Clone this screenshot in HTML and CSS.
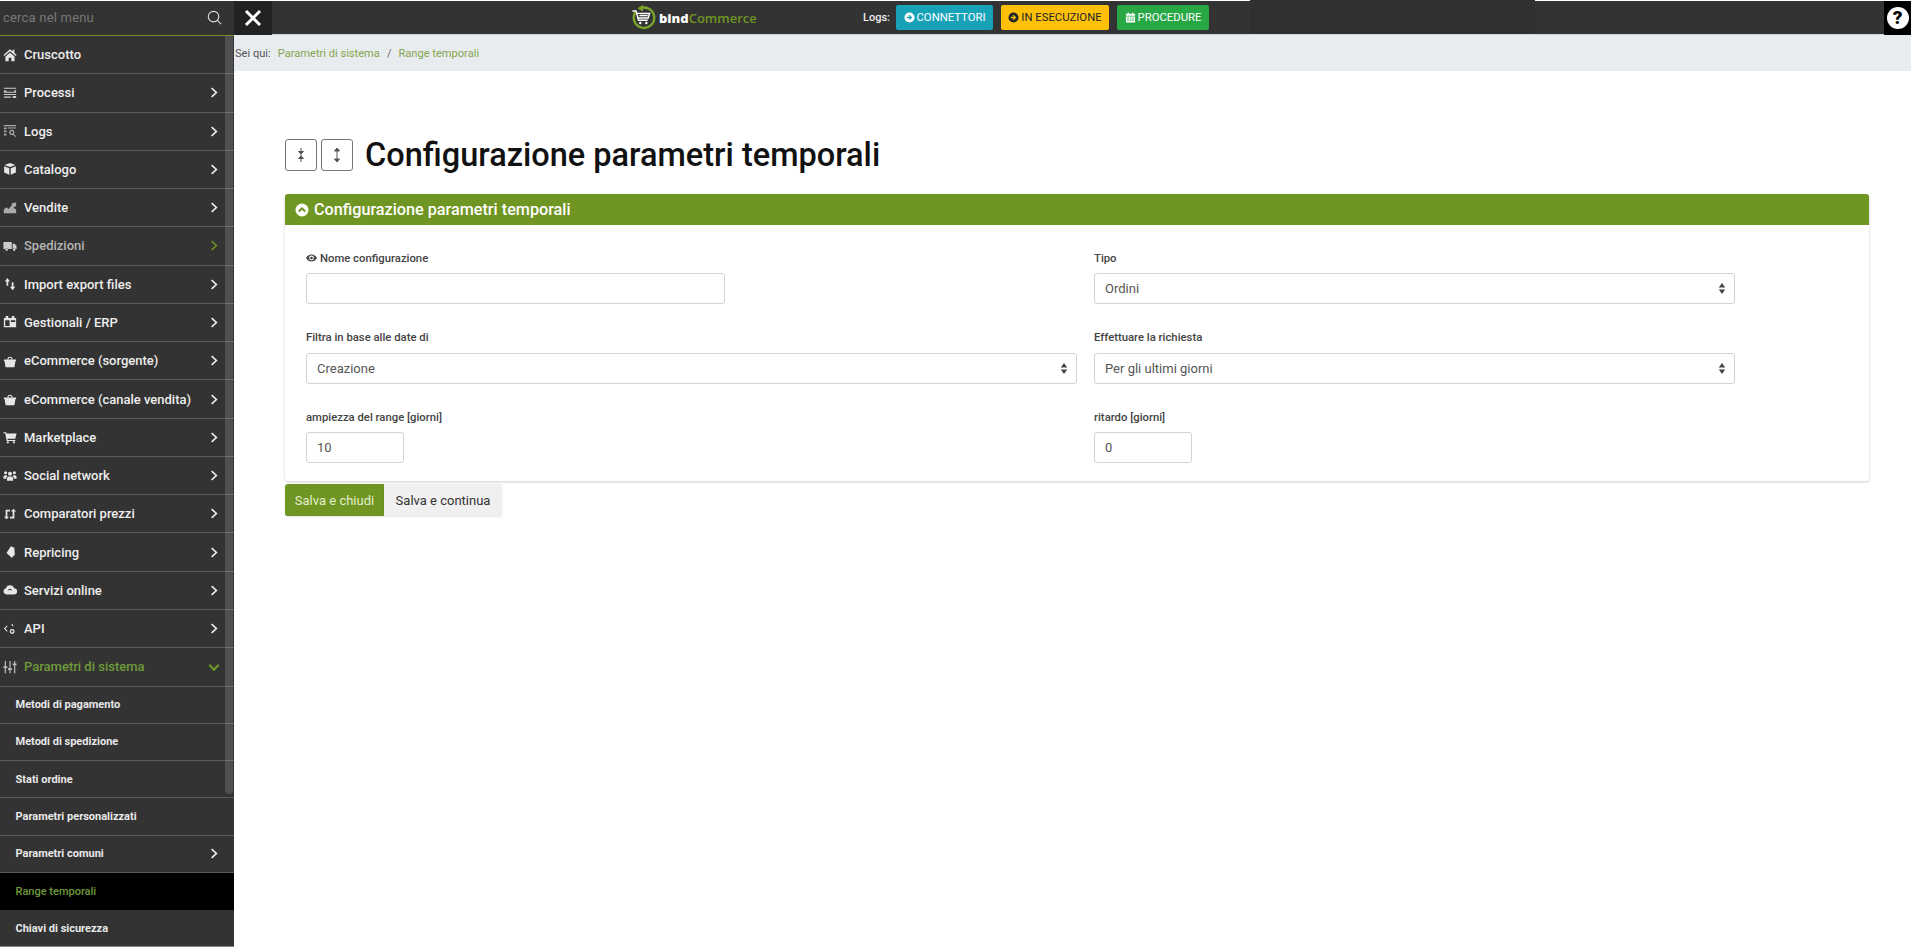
FILE: index.html
```html
<!DOCTYPE html>
<html lang="it">
<head>
<meta charset="utf-8">
<title>Configurazione parametri temporali</title>
<link rel="stylesheet" href="styles.css">
</head>
<body>
<div class="app">
  <aside class="sidebar">
    <div class="search">
      <span class="search-text">cerca nel menu</span>
      <svg class="search-icon" viewBox="0 0 16 16"><circle cx="7" cy="7" r="5.6"/><path d="M11 11l4 4"/></svg>
    </div>
    <div class="menu-wrap">
      <ul class="menu">
        <li class="item"><svg class="ico" viewBox="0 0 16 16"><path d="M8 1.5L0.5 8l1 1.2L8 3.800l6.500 5.400 1-1.200-2.500-2.200V2h-2v2zM2.800 9.600V15h3.700v-4h3v4h3.700V9.600L8 5.300z"/></svg><span class="label">Cruscotto</span></li>
        <li class="item has"><svg class="ico" viewBox="0 0 16 16"><path d="M1 2h14v1.200H1zM1 5h3v1.500h9V4.800h2v3H1zM1 9h14v1.200H1zM1 12h8v1.300H1zM11 11.500h4v2.300h-4z" opacity=".85"/></svg><span class="label">Processi</span><svg class="chev" viewBox="0 0 10 14"><path d="M2 1.500L8 7l-6 5.500"/></svg></li>
        <li class="item has"><svg class="ico dim" viewBox="0 0 16 16"><path d="M1 1h14v1.500H1zM1 4h3v2H1zM1 7.500h3v2H1zM1 11h3v2H1zM5.500 4H15v1.200H5.500zM10 6.500a3 3 0 1 1-.01 0zm0 1.400a1.600 1.600 0 1 0 .01 0zM12 11l3 3-.9.9-3-3z"/></svg><span class="label">Logs</span><svg class="chev" viewBox="0 0 10 14"><path d="M2 1.500L8 7l-6 5.500"/></svg></li>
        <li class="item has"><svg class="ico" viewBox="0 0 16 16"><path d="M8 1l6.200 2.400L8 5.800 1.800 3.400zM1.300 4.800l5.900 2.300v7.600l-5.900-2.600zM14.700 4.800v7.300l-5.900 2.600V7.100z"/></svg><span class="label">Catalogo</span><svg class="chev" viewBox="0 0 10 14"><path d="M2 1.500L8 7l-6 5.500"/></svg></li>
        <li class="item has"><svg class="ico dim" viewBox="0 0 16 16"><path d="M1 14V9.500L4 7l2.500 2L10.500 4 9.500 2.800 15 1.500v5.500l-1.200-1.200L12 8l3 1.500V14z"/></svg><span class="label">Vendite</span><svg class="chev" viewBox="0 0 10 14"><path d="M2 1.500L8 7l-6 5.500"/></svg></li>
        <li class="item has muted"><svg class="ico" viewBox="0 0 16 16"><path d="M0.500 3.500h9.500v8H6a2 2 0 0 0-3.600 0H0.500zM11 5.500h2.400l2.100 2.600v3.400h-.9a2 2 0 0 0-3.600 0zM4.200 10.600a1.500 1.500 0 1 1 0 3 1.500 1.500 0 0 1 0-3zM12.800 10.600a1.500 1.500 0 1 1 0 3 1.500 1.500 0 0 1 0-3z"/></svg><span class="label">Spedizioni</span><svg class="chev green" viewBox="0 0 10 14"><path d="M2 1.500L8 7l-6 5.500"/></svg></li>
        <li class="item has"><svg class="ico" viewBox="0 0 16 16"><path d="M5 1L8 5H6v5H4V5H2zM11 15l-3-4h2V6h2v5h2z"/></svg><span class="label">Import export files</span><svg class="chev" viewBox="0 0 10 14"><path d="M2 1.500L8 7l-6 5.500"/></svg></li>
        <li class="item has"><svg class="ico" viewBox="0 0 16 16"><path d="M3 1h3v2.500h4V1h3v2.500h2V14H1V3.500h2zM2.500 6v6.500h5V6zM9 6v2h5V6z"/></svg><span class="label">Gestionali / ERP</span><svg class="chev" viewBox="0 0 10 14"><path d="M2 1.500L8 7l-6 5.500"/></svg></li>
        <li class="item has"><svg class="ico" viewBox="0 0 16 16"><path d="M5 6a3 3 0 0 1 6 0h-1.400a1.600 1.600 0 0 0-3.200 0zM1 6.300h14v1.600h-.7L13 15H3L1.700 7.900H1z"/></svg><span class="label">eCommerce (sorgente)</span><svg class="chev" viewBox="0 0 10 14"><path d="M2 1.500L8 7l-6 5.500"/></svg></li>
        <li class="item has"><svg class="ico" viewBox="0 0 16 16"><path d="M5 6a3 3 0 0 1 6 0h-1.400a1.600 1.600 0 0 0-3.200 0zM1 6.300h14v1.600h-.7L13 15H3L1.700 7.900H1z"/></svg><span class="label">eCommerce (canale vendita)</span><svg class="chev" viewBox="0 0 10 14"><path d="M2 1.500L8 7l-6 5.500"/></svg></li>
        <li class="item has"><svg class="ico" viewBox="0 0 16 16"><path d="M0.500 2.500h3l.6 1.500H15.500l-1.500 6H5.200l.3 1.300H14V12.500H4.200L2.500 3.800h-2zM5.500 12.800a1.300 1.300 0 1 1 0 2.600 1.300 1.300 0 0 1 0-2.600zM12.500 12.800a1.300 1.300 0 1 1 0 2.600 1.300 1.300 0 0 1 0-2.600z"/></svg><span class="label">Marketplace</span><svg class="chev" viewBox="0 0 10 14"><path d="M2 1.500L8 7l-6 5.500"/></svg></li>
        <li class="item has"><svg class="ico" viewBox="0 0 16 16"><path d="M8 3a2.300 2.300 0 1 1 0 4.600A2.300 2.300 0 0 1 8 3zM3 2.500a1.800 1.800 0 1 1 0 3.600 1.800 1.800 0 0 1 0-3.600zM13 2.500a1.800 1.800 0 1 1 0 3.600 1.800 1.800 0 0 1 0-3.600zM0.500 11V8.500Q1 7 3 7h1.300Q4.500 8 5 8.500 3.500 9.200 3.500 11zM15.500 11V8.500Q15 7 13 7h-1.300q-.2 1-.7 1.500 1.500.7 1.500 2.500zM4.500 13.500V10.500Q5 8.500 6.500 8.500h3Q11 8.500 11.500 10.500v3z"/></svg><span class="label">Social network</span><svg class="chev" viewBox="0 0 10 14"><path d="M2 1.500L8 7l-6 5.500"/></svg></li>
        <li class="item has"><svg class="ico" viewBox="0 0 16 16"><path d="M3 3h5v2H5v6h2l-3 3-3-3h2zM13 13H8v-2h3V5H9l3-3 3 3h-2z"/></svg><span class="label">Comparatori prezzi</span><svg class="chev" viewBox="0 0 10 14"><path d="M2 1.500L8 7l-6 5.500"/></svg></li>
        <li class="item has"><svg class="ico" viewBox="0 0 16 16"><path d="M9 1.500l4 1.500 .5 8-3.500 3.500-6-5.500z"/></svg><span class="label">Repricing</span><svg class="chev" viewBox="0 0 10 14"><path d="M2 1.500L8 7l-6 5.500"/></svg></li>
        <li class="item has"><svg class="ico" viewBox="0 0 16 16"><path d="M4 13a3.500 3.500 0 0 1-.7-6.900A5 5 0 0 1 12.800 6 3.500 3.500 0 0 1 12.500 13zM8 6.500a2.500 2.500 0 0 0-2.400 1.800h1.500a1 1 0 0 1 1.800 0h1.500A2.500 2.500 0 0 0 8 6.500z"/></svg><span class="label">Servizi online</span><svg class="chev" viewBox="0 0 10 14"><path d="M2 1.500L8 7l-6 5.500"/></svg></li>
        <li class="item has"><svg class="ico" viewBox="0 0 16 16"><path d="M4.500 4L1 7.500l3.500 3.500.8-.8L2.600 7.500l2.700-2.700zM9.500 2.500l1.100-.6L12 4.500l-1 .6zM10.500 8a2.800 2.800 0 1 1 0 5.600 2.800 2.800 0 0 1 0-5.600zm0 1.500a1.300 1.300 0 1 0 0 2.600 1.300 1.300 0 0 0 0-2.600z"/></svg><span class="label">API</span><svg class="chev" viewBox="0 0 10 14"><path d="M2 1.500L8 7l-6 5.500"/></svg></li>
        <li class="item open"><svg class="ico" viewBox="0 0 16 16"><path d="M2 1h1.400v6H5v2H3.400v6H2V9H.5V7H2zM7.300 1h1.400v8.500h1.600v2H8.700V15H7.300v-3.500H5.700v-2h1.600zM12.600 1H14v3h1.500v2H14v9h-1.400V6H11V4h1.600z"/></svg><span class="label">Parametri di sistema</span><svg class="chev-down" viewBox="0 0 14 10"><path d="M1.500 2L7 8l5.500-6"/></svg></li>
        <li class="sub">Metodi di pagamento</li>
        <li class="sub">Metodi di spedizione</li>
        <li class="sub">Stati ordine</li>
        <li class="sub">Parametri personalizzati</li>
        <li class="sub has">Parametri comuni<svg class="chev" viewBox="0 0 10 14"><path d="M2 1.500L8 7l-6 5.500"/></svg></li>
        <li class="sub active">Range temporali</li>
        <li class="sub">Chiavi di sicurezza</li>
      </ul>
      <div class="scroll-thumb"></div>
    </div>
  </aside>

  <div class="main">
    <header class="topbar">
      <button class="close" aria-label="Chiudi"><svg viewBox="0 0 18 18"><path d="M2 2l14 14M16 2L2 16"/></svg></button>
      <div class="logo">
        <svg class="logo-mark" viewBox="0 0 28 28"><path class="ring" d="M9 4.500A11 11 0 1 1 5 8"/><path class="ring-tip" d="M13 0.500v7L7 4z"/><path class="cart" d="M1.500 7h4l2.500 10h10M6 9.500h14l-1.500 5H7.300M9 11.800h9"/><circle class="dot" cx="10" cy="20" r="1.300"/><circle class="dot" cx="16.500" cy="20" r="1.300"/></svg>
        <span class="logo-text"><b>bind</b><span>Commerce</span></span>
      </div>
      <span class="logs-label">Logs:</span>
      <a class="tag tag-info"><svg viewBox="0 0 12 12"><path fill-rule="evenodd" d="M6 .5a5.500 5.500 0 1 1 0 11 5.500 5.500 0 0 1 0-11zM6 3L5.200 3.800 6.500 5.100H3v1.800h3.500L5.200 8.200 6 9l3-3z"/></svg>CONNETTORI</a>
      <a class="tag tag-warn"><svg viewBox="0 0 12 12"><path fill-rule="evenodd" d="M6 .5a5.500 5.500 0 1 1 0 11 5.500 5.500 0 0 1 0-11zM6 3L5.200 3.800 6.500 5.100H3v1.800h3.500L5.200 8.200 6 9l3-3z"/></svg>IN ESECUZIONE</a>
      <a class="tag tag-ok"><svg viewBox="0 0 12 12"><path d="M3 .5h1.200V2h3.600V.5H9V2h2v2H1V2h2zM1 5h10v6.500H1zM2.500 6v1.200h1.500V6zm2.800 0v1.200h1.500V6zm2.700 0v1.200h1.500V6zM2.500 8.300v1.200h1.500V8.300zm2.800 0v1.200h1.500V8.300zm2.700 0v1.200h1.500V8.300z"/></svg>PROCEDURE</a>
      <div class="mask"></div>
      <div class="help"><span class="help-dot">?</span></div>
    </header>

    <nav class="crumbs">
      <span>Sei qui:</span><a>Parametri di sistema</a><i>/</i><a>Range temporali</a>
    </nav>

    <main class="content">
      <div class="title-row">
        <button class="icon-btn"><svg viewBox="0 0 10 16"><path d="M5 1v14M5 7L2.500 4.500h5zM5 9l-2.500 2.500h5z"/></svg></button>
        <button class="icon-btn"><svg viewBox="0 0 10 16"><path d="M5 2v12M5 1L2.500 4h5zM5 15l-2.500-3h5z"/></svg></button>
        <h1>Configurazione parametri temporali</h1>
      </div>

      <section class="card">
        <div class="card-head">
          <svg viewBox="0 0 14 14"><circle cx="7" cy="7" r="6.500"/><path d="M3.800 8.500L7 5.300l3.200 3.200"/></svg>
          Configurazione parametri temporali
        </div>
        <div class="card-body">
          <div class="field">
            <label><svg class="eye" viewBox="0 0 16 10"><path fill-rule="evenodd" d="M8 0c3.500 0 6.300 2.300 8 5-1.700 2.700-4.500 5-8 5S1.700 7.700 0 5c1.700-2.700 4.500-5 8-5zm0 1.500a3.500 3.500 0 1 0 0 7 3.500 3.500 0 0 0 0-7zM8 3a2 2 0 1 1 0 4 2 2 0 0 1 0-4z"/></svg>Nome configurazione</label>
            <input class="ctl ctl-name" type="text">
          </div>
          <div class="field">
            <label>Tipo</label>
            <div class="select-wrap"><select class="ctl"><option>Ordini</option></select><svg class="updown" viewBox="0 0 8 12"><path d="M4 0l3.500 4.800h-7zM4 12L.5 7.200h7z"/></svg></div>
          </div>
          <div class="field">
            <label>Filtra in base alle date di</label>
            <div class="select-wrap"><select class="ctl"><option>Creazione</option></select><svg class="updown" viewBox="0 0 8 12"><path d="M4 0l3.500 4.800h-7zM4 12L.5 7.200h7z"/></svg></div>
          </div>
          <div class="field">
            <label>Effettuare la richiesta</label>
            <div class="select-wrap"><select class="ctl"><option>Per gli ultimi giorni</option></select><svg class="updown" viewBox="0 0 8 12"><path d="M4 0l3.500 4.800h-7zM4 12L.5 7.200h7z"/></svg></div>
          </div>
          <div class="field">
            <label>ampiezza del range [giorni]</label>
            <input class="ctl ctl-num" type="text" value="10">
          </div>
          <div class="field">
            <label>ritardo [giorni]</label>
            <input class="ctl ctl-num" type="text" value="0">
          </div>
        </div>
      </section>

      <div class="actions">
        <button class="btn btn-primary">Salva e chiudi</button>
        <button class="btn btn-light">Salva e continua</button>
      </div>
    </main>
  </div>
</div>
</body>
</html>
```
FILE: styles.css
```css
* { box-sizing: border-box; }
html, body { margin: 0; height: 100%; overflow: hidden; background: #fff; }
body { font-family: Roboto, "Liberation Sans", sans-serif; color: #212529; }
.app { display: flex; height: 949px; }

/* sidebar */
.sidebar { width: 234px; flex: none; height: 947px; background: #333; display: flex; flex-direction: column; border-top: 1px solid #fff; border-bottom: 1px solid #888; }
.search { height: 35px; flex: none; display: flex; align-items: center; justify-content: space-between; padding: 0 12px 2px 3px; border-bottom: 1px solid #6f8f2a; }
.search-text { font-size: 13px; color: #777; letter-spacing: .2px; }
.search-icon { width: 15px; height: 15px; fill: none; stroke: #ddd; stroke-width: 1.2; }
.menu-wrap { position: relative; flex: 1; overflow: hidden; }
.scroll-thumb { position: absolute; z-index: 1; top: 0; right: 1px; width: 8px; height: 758px; background: rgba(255,255,255,.14); border-radius: 0 0 4px 4px; }
.menu { list-style: none; margin: 0; padding: 0; }
.item { position: relative; height: 38.27px; display: flex; align-items: center; padding-left: 3px; border-bottom: 1px solid #5a5a5a; font-size: 13px; font-weight: 500; color: #eee; }
.ico { width: 14px; height: 14px; flex: none; fill: #e6e6e6; margin-right: 7px; }
.ico.dim { fill: #aaa; }
.label { white-space: nowrap; }
.chev { position: absolute; z-index: 2; right: 16px; top: 50%; margin-top: -5.500px; width: 8px; height: 11px; fill: none; stroke: #eee; stroke-width: 2.100; }
.chev.green { stroke: #6f8f2a; }
.chev-down { position: absolute; z-index: 2; right: 14px; top: 50%; margin-top: -4px; width: 12px; height: 8.500px; fill: none; stroke: #6f9522; stroke-width: 2.500; }
.muted { color: #b4b4b4; }
.muted .ico { fill: #ccc; }
.open { color: #6f9a3a; }
.open .ico { fill: #bbb; }
.sub { position: relative; height: 37.3px; display: flex; align-items: center; padding-left: 15.500px; border-bottom: 1px solid #5a5a5a; font-size: 11px; font-weight: 700; color: #e8e8e8; white-space: nowrap; }
.sub.active { background: #000; color: #6f9a3a; font-weight: 500; border-bottom: 0; }
.sub .chev { right: 16px; }

/* main */
.main { flex: 1; min-width: 0; display: flex; flex-direction: column; }
.topbar { height: 35px; flex: none; display: flex; align-items: center; background: #333; border-top: 1px solid #fff; border-bottom: 1px solid #cfd3d6; font-size: 11px; }
.close { width: 38px; height: 34px; flex: none; padding: 0; border: 0; background: #222; display: flex; align-items: center; justify-content: center; }
.close svg { width: 18px; height: 18px; fill: none; stroke: #fff; stroke-width: 3; }
.logo { display: flex; align-items: center; margin-left: 359px; width: 232px; }
.logo-mark { width: 26px; height: 27px; flex: none; margin-right: 2px; }
.ring { fill: none; stroke: #7aa52a; stroke-width: 2.600; }
.ring-tip { fill: #7aa52a; }
.cart { fill: none; stroke: #fff; stroke-width: 1.500; }
.dot { fill: #fff; }
.logo-text { font-family: "Open Sans", sans-serif; font-size: 13px; font-weight: 700; white-space: nowrap; }
.logo-text b { color: #fff; }
.logo-text span { color: #6f9522; font-weight: 600; }
.logs-label { color: #eee; font-weight: 500; font-size: 11px; width: 31px; margin-right: 2px; white-space: nowrap; }
.tag { height: 25px; margin-top: -1px; display: flex; align-items: center; justify-content: center; gap: 2px; border-radius: 2px; font-size: 11.300px; white-space: nowrap; margin-right: 8px; }
.tag svg { width: 11px; height: 11px; flex: none; fill: currentColor; }
.tag-info { width: 97px; background: #17a2b8; color: #fff; }
.tag-warn { width: 108px; background: #ffc107; color: #212529; }
.tag-ok { width: 92px; background: #28a745; color: #fff; margin-right: 0; }
.mask { width: 285px; height: 35px; margin-top: -2px; flex: none; margin-left: 41px; background: #303030; }
.help { width: 27px; height: 34px; flex: none; margin-left: auto; background: #000; display: flex; align-items: center; justify-content: center; }
.help-dot { width: 22px; height: 22px; border-radius: 50%; background: #fff; color: #000; font-size: 19px; font-weight: 900; line-height: 22px; text-align: center; }

.crumbs { height: 36px; flex: none; display: flex; align-items: center; padding-left: 1px; background: #e9ecef; font-size: 11.100px; color: #555; }
.crumbs a { color: #84a64e; margin-left: 7px; }
.crumbs i { font-style: normal; color: #666; margin-left: 7px; }

.content { padding: 68px 42px 0 51px; }
.title-row { display: flex; align-items: center; height: 32px; margin-bottom: 23px; }
.icon-btn { width: 32px; height: 32px; padding: 0; margin-right: 4px; background: #fff; border: 1px solid #777; border-radius: 3px; display: flex; align-items: center; justify-content: center; }
.icon-btn svg { width: 10px; height: 16px; fill: #555; stroke: #555; stroke-width: 1; }
h1 { margin: 0 0 0 8px; font-size: 32.500px; font-weight: 500; color: #111; line-height: 32px; white-space: nowrap; }

.card { background: #fff; box-shadow: 0 1px 3px rgba(0,0,0,.2); border-radius: 3px; }
.card-head { height: 31px; display: flex; align-items: center; gap: 5px; padding-left: 10px; background: #6f9522; color: #fff; font-size: 16.200px; font-weight: 500; border-radius: 3px 3px 0 0; }
.card-head svg { width: 14px; height: 14px; flex: none; }
.card-head circle { fill: #fff; }
.card-head path { fill: none; stroke: #6f9522; stroke-width: 2; }
.card-body { display: grid; grid-template-columns: 771px 641px; column-gap: 17px; row-gap: 25.500px; padding: 25px 21px 18px; }
.field label { display: flex; align-items: center; height: 16px; margin-bottom: 7px; font-size: 11.300px; font-weight: 500; color: #444; }
.eye { width: 11px; height: 8px; margin-right: 3px; fill: #444; }
.ctl { display: block; width: 100%; height: 31px; padding: 0 10px; background: #fff; border: 1px solid #ced4da; border-radius: 3px; font: 400 13px Roboto, sans-serif; color: #555; appearance: none; outline: 0; }
.ctl-name { width: 419px; }
.ctl-num { width: 98px; }
.select-wrap { position: relative; }
.updown { position: absolute; right: 9px; top: 10px; width: 8px; height: 11px; fill: #444; }

.actions { display: flex; margin-top: 3px; }
.btn { height: 32px; padding: 0; border: 0; font: 400 13px Roboto, sans-serif; box-shadow: 0 1px 2px rgba(0,0,0,.1); }
.btn-primary { width: 99px; background: #6f9522; color: #e4efce; border-radius: 3px 0 0 3px; }
.btn-light { width: 118px; background: #f0f0f0; color: #333; border-radius: 0 3px 3px 0; }
```
